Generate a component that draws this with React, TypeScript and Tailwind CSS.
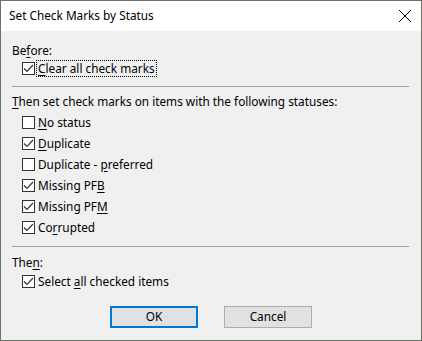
import type { ReactNode } from "react";

function Box({ checked }: { checked: boolean }) {
  return (
    <span className="w-[13px] h-[13px] shrink-0 border border-[#333333] bg-white flex items-center justify-center">
      {checked && (
        <svg width="11" height="11" viewBox="0 0 11 11">
          <polyline points="1,5.5 4,8.5 10,2" fill="none" stroke="#333333" strokeWidth="1.2" />
        </svg>
      )}
    </span>
  );
}

function Check({
  checked,
  focus,
  children,
}: {
  checked: boolean;
  focus?: boolean;
  children: ReactNode;
}) {
  return (
    <div className="flex items-center h-[21px] pl-[21px]">
      <Box checked={checked} />
      <span
        className={`ml-[2px] px-[1px] leading-[15px] ${
          focus ? "outline outline-1 outline-dotted outline-black" : ""
        }`}
      >
        {children}
      </span>
    </div>
  );
}

const U = ({ children }: { children: ReactNode }) => <span className="underline underline-offset-2">{children}</span>;

export default function App() {
  return (
    <div
      className="w-[422px] h-[341px] border border-[#6c7266] flex flex-col bg-[#f0f0f0] text-black text-[11.8px]"
      style={{ fontFamily: '"Segoe UI", "Noto Sans", sans-serif' }}
    >
      <div className="h-[30px] bg-white flex items-center justify-between pl-[8px] pr-[8px]">
        <span>Set Check Marks by Status</span>
        <svg width="14" height="14" viewBox="0 0 14 14" className="mr-[1px]">
          <path d="M1 1 L13 13 M13 1 L1 13" stroke="#000" strokeWidth="1" />
        </svg>
      </div>

      <div className="flex flex-col px-[11px] pt-[11px]">
        <div className="h-[16px] leading-[16px]">
          Be<U>f</U>ore:
        </div>
        <div className="-ml-[11px]">
          <Check checked focus>
            <U>C</U>lear all check marks
          </Check>
        </div>
        <div className="mt-[7px] h-px bg-[#a0a0a0] mr-[1px]" />

        <div className="mt-[6px] h-[16px] leading-[16px]">
          <U>T</U>hen set check marks on items with the following statuses:
        </div>
        <div className="-ml-[11px] mt-[3px] flex flex-col">
          <Check checked={false}>
            <U>N</U>o status
          </Check>
          <Check checked>
            <U>D</U>uplicate
          </Check>
          <Check checked={false}>
            Duplicate - <U>p</U>referred
          </Check>
          <Check checked>
            Missing PF<U>B</U>
          </Check>
          <Check checked>
            Missing PF<U>M</U>
          </Check>
          <Check checked>
            Co<U>r</U>rupted
          </Check>
        </div>
        <div className="mt-[8px] h-px bg-[#a0a0a0] mr-[1px]" />

        <div className="mt-[7px] h-[16px] leading-[16px]">
          The<U>n</U>:
        </div>
        <div className="-ml-[11px] mt-[1px]">
          <Check checked>
            Select <U>a</U>ll checked items
          </Check>
        </div>

        <div className="flex justify-center gap-[26px] mt-[14px]">
          <button className="w-[88px] h-[22px] bg-[#e1e1e1] border-2 border-[#0078d7] leading-none">
            OK
          </button>
          <button className="w-[88px] h-[22px] bg-[#e1e1e1] border border-[#adadad] leading-none">
            Cancel
          </button>
        </div>
      </div>
    </div>
  );
}
